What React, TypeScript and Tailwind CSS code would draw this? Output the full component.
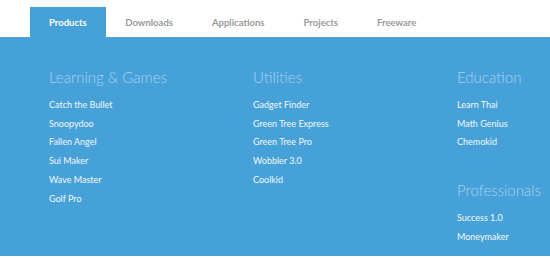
import React from "react";

const tabs = ["Products", "Downloads", "Applications", "Projects", "Freeware"];

type Section = { title: string; items: string[] };

const columns: Section[][] = [
  [{ title: "Learning & Games", items: ["Catch the Bullet", "Snoopydoo", "Fallen Angel", "Sui Maker", "Wave Master", "Golf Pro"] }],
  [{ title: "Utilities", items: ["Gadget Finder", "Green Tree Express", "Green Tree Pro", "Wobbler 3.0", "Coolkid"] }],
  [
    { title: "Education", items: ["Learn Thai", "Math Genius", "Chemokid"] },
    { title: "Professionals", items: ["Success 1.0", "Moneymaker"] },
  ],
];

export default function App() {
  return (
    <div className="w-[550px] h-[258px] bg-white overflow-hidden" style={{ fontFamily: "Lato, 'Open Sans', sans-serif" }}>
      <div className="flex pl-[30px] pt-[7px] h-[37px]">
        {tabs.map((t, i) => (
          <div
            key={t}
            className={
              i === 0
                ? "h-[30px] px-[19px] pt-[3px] flex items-center text-[9.5px] font-bold text-white bg-[#46a1d9]"
                : "h-[30px] px-[19.5px] pt-[3px] flex items-center text-[9.5px] font-bold text-[#9a9a9a]"
            }
          >
            {t}
          </div>
        ))}
      </div>
      <div className="h-[219px] bg-[#46a1d9] flex pl-[49px] pt-[30px]">
        {columns.map((col, ci) => (
          <div key={ci} className="w-[204px] shrink-0 flex flex-col gap-[28px]">
            {col.map((s) => (
              <div key={s.title} className="flex flex-col">
                <div className="text-[15px] font-light text-[#a6d3f0] leading-[20px] mb-[9px]">{s.title}</div>
                {s.items.map((it) => (
                  <div key={it} className="text-[9px] text-[#f2f8fc] leading-[18.7px]">
                    {it}
                  </div>
                ))}
              </div>
            ))}
          </div>
        ))}
      </div>
    </div>
  );
}
